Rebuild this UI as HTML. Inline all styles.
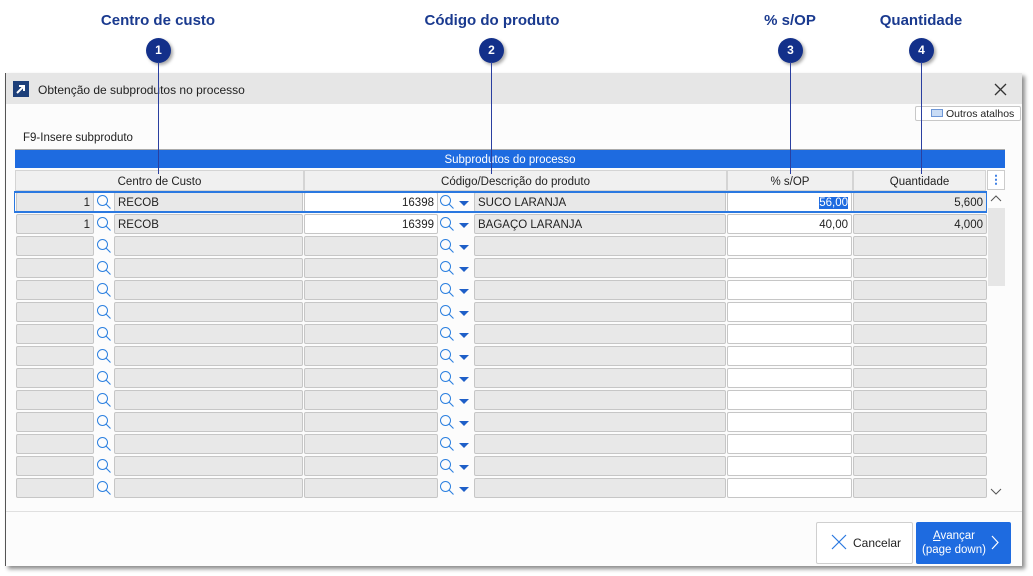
<!DOCTYPE html>
<html><head><meta charset="utf-8"><style>
*{box-sizing:border-box;margin:0;padding:0}
body{width:1033px;height:576px;background:#fff;position:relative;overflow:hidden;font-family:"Liberation Sans",sans-serif;font-size:11.5px;color:#222}
.a{position:absolute}
.lbl{position:absolute;top:12px;font-weight:bold;font-size:15px;color:#1a3a8f;text-align:center;width:200px}
.badge{position:absolute;top:38px;width:25px;height:25px;border-radius:50%;background:#13308a;color:#fff;font-weight:bold;font-size:12px;text-align:center;line-height:25px;box-shadow:2px 2px 3px rgba(0,0,0,.35)}
.vl{position:absolute;top:62px;width:1px;background:#2a3fa0;z-index:5}
.g,.w{position:absolute;height:20px;border:1px solid #c6c6c6;border-radius:2px;background:#e8e8e8;line-height:21px;padding:0 3px;white-space:nowrap}
.w{background:#fff}
.r{text-align:right}
.hd{position:absolute;top:170px;height:21px;background:#f0f0f0;border:1px solid #d4d4d4;text-align:center;line-height:22px}
svg.s{position:absolute;width:16px;height:16px}
.tri{position:absolute;width:0;height:0;border-left:5px solid transparent;border-right:5px solid transparent;border-top:5px solid #1e5fc8}
</style></head><body>
<svg width="0" height="0" style="position:absolute"><defs><symbol id="q" viewBox="0 0 16 16"><circle cx="6.5" cy="6.5" r="5" fill="none" stroke="#2c80e0" stroke-width="1"/><path d="M10 10l4.5 4.5" stroke="#2c80e0" stroke-width="1.1"/></symbol></defs></svg>

<div class="lbl" style="left:58px">Centro de custo</div>
<div class="lbl" style="left:392px">Código do produto</div>
<div class="lbl" style="left:690px">% s/OP</div>
<div class="lbl" style="left:821px">Quantidade</div>
<div class="badge" style="left:146px">1</div>
<div class="badge" style="left:479px">2</div>
<div class="badge" style="left:778px">3</div>
<div class="badge" style="left:909px">4</div>
<div class="vl" style="left:158px;height:112px"></div>
<div class="vl" style="left:491px;height:112px"></div>
<div class="vl" style="left:790px;height:112px"></div>
<div class="vl" style="left:921px;height:112px"></div>

<div class="a" style="left:5px;top:73px;width:1017px;height:493px;background:#fcfcfc;border-left:1px solid #555;box-shadow:3px 3px 4px rgba(0,0,0,.45)"></div>
<div class="a" style="left:6px;top:73px;width:1016px;height:31px;background:#e6e6e6"></div>
<div class="a" style="left:13px;top:81px;width:16px;height:16px;background:#1d3f7a"><svg width="16" height="16"><path d="M4 12L11 5M6 5h5v5" stroke="#fff" stroke-width="2" fill="none"/></svg></div>
<div class="a" style="left:38px;top:83px;font-size:12px">Obtenção de subprodutos no processo</div>
<svg class="a" style="left:994px;top:83px" width="13" height="13"><path d="M1 1L12 12M12 1L1 12" stroke="#333" stroke-width="1.3"/></svg>
<div class="a" style="left:915px;top:106px;width:106px;height:15px;border:1px solid #c8c8c8;border-radius:2px;background:#fff;font-size:10.5px;line-height:14px;padding-left:30px">Outros atalhos</div>
<div class="a" style="left:931px;top:109px;width:12px;height:8px;background:#c9dcf5;border:1px solid #6d96d6"></div>
<div class="a" style="left:23px;top:132px">F9-Insere subproduto</div>
<div class="a" style="left:15px;top:149px;width:990px;height:19px;background:#1e6be0;color:#fff;text-align:center;line-height:20px;border-top:1px solid #aaa">Subprodutos do processo</div>
<div class="hd" style="left:15px;width:289px">Centro de Custo</div>
<div class="hd" style="left:304px;width:423px">Código/Descrição do produto</div>
<div class="hd" style="left:727px;width:126px">% s/OP</div>
<div class="hd" style="left:853px;width:133px">Quantidade</div>
<div class="a" style="left:987px;top:170px;width:18px;height:20px;border:1px solid #ccc;background:#fff;color:#1e6be0;font-weight:bold;text-align:center;line-height:18px">⋮</div>
<div class="a" style="left:988px;top:208px;width:17px;height:78px;background:#e6e6e6"></div>
<svg class="a" style="left:990px;top:195px" width="12" height="8"><path d="M1 6L6 1L11 6" stroke="#555" fill="none"/></svg>
<svg class="a" style="left:990px;top:487px" width="12" height="8"><path d="M1 2L6 7L11 2" stroke="#555" fill="none"/></svg>

<div id="rows"></div>
<div class="a" style="left:14px;top:191px;width:973px;height:22px;border:2px solid #2a78e0;border-left-width:1px;border-right-width:1px;z-index:3;pointer-events:none"></div>

<div class="a" style="left:6px;top:511px;width:1016px;height:1px;background:#e0e0e0"></div>
<div class="a" style="left:816px;top:522px;width:97px;height:42px;border:1px solid #cfcfcf;border-radius:2px;background:#fff;font-size:12px;line-height:41px;padding-left:36px">Cancelar</div>
<svg class="a" style="left:831px;top:534px" width="16" height="16"><path d="M1 1L15 15M15 1L1 15" stroke="#2a78e0" stroke-width="1.2"/></svg>
<div class="a" style="left:916px;top:522px;width:95px;height:42px;border-radius:2px;background:#1e6be0;color:#fff;font-size:11.5px;line-height:14px">
 <div style="position:absolute;left:4px;top:7px;width:68px;text-align:center"><u>A</u>vançar<br>(page down)</div>
 <svg style="position:absolute;left:75px;top:13px" width="9" height="15"><path d="M1 1L7 7.5L1 14" stroke="#fff" fill="none" stroke-width="1.2"/></svg>
</div>

<script>
var h='';
for(var i=0;i<14;i++){
 var t=192+i*22;
 var d=i<2;
 h+='<div class="g r" style="left:16px;top:'+t+'px;width:78px">'+(d?'1':'')+'</div>';
 h+='<svg class="s" style="left:96px;top:'+(t+2)+'px"><use href="#q"/></svg>';
 h+='<div class="g" style="left:114px;top:'+t+'px;width:189px">'+(d?'RECOB':'')+'</div>';
 h+='<div class="'+(d?'w':'g')+' r" style="left:304px;top:'+t+'px;width:134px">'+(i==0?'16398':i==1?'16399':'')+'</div>';
 h+='<svg class="s" style="left:439px;top:'+(t+2)+'px"><use href="#q"/></svg>';
 h+='<div class="tri" style="left:459px;top:'+(t+9)+'px"></div>';
 h+='<div class="g" style="left:474px;top:'+t+'px;width:252px">'+(i==0?'SUCO LARANJA':i==1?'BAGAÇO LARANJA':'')+'</div>';
 h+='<div class="w r" style="left:727px;top:'+t+'px;width:125px">'+(i==0?'<span style="background:#1e6be0;color:#fff">56,00</span>':i==1?'40,00':'')+'</div>';
 h+='<div class="g r" style="left:853px;top:'+t+'px;width:134px">'+(i==0?'5,600':i==1?'4,000':'')+'</div>';
}
document.getElementById('rows').innerHTML=h;
</script>
</body></html>
